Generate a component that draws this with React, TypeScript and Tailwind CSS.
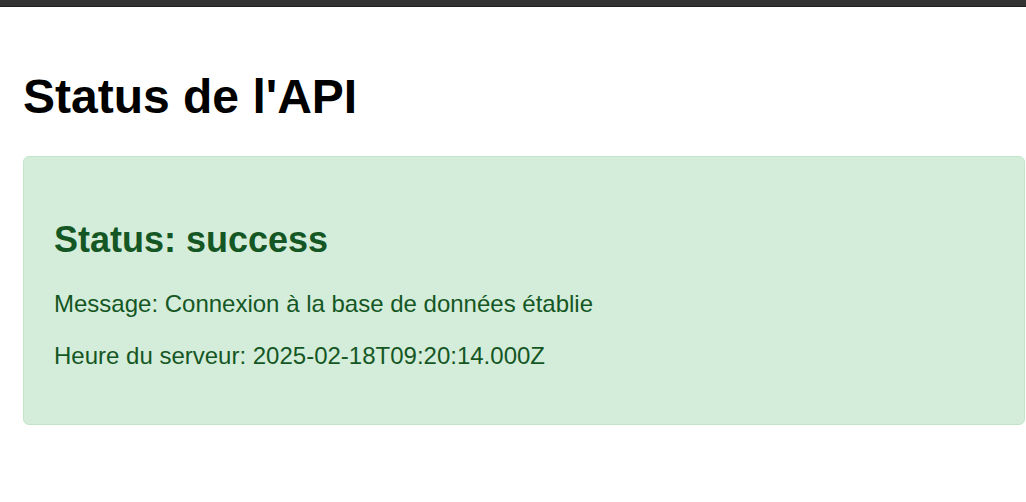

import React from 'react';

interface ApiStatus {
  status: string;
  message: string;
  serverTime: string;
}

const data: ApiStatus = {
  status: 'success',
  message: 'Connexion à la base de données établie',
  serverTime: '2025-02-18T09:20:14.000Z',
};

export default function App() {
  return (
    <div className="min-h-screen bg-white font-['Liberation_Sans',Arial,sans-serif]">
      {/* Top bar */}
      <div className="h-[7px] bg-[#333333] border-b border-[#1f1f1f]" />

      <div className="pl-[23px] pr-[1px]">
        {/* Title */}
        <h1 className="mt-[63px] text-[48px] leading-[54px] font-bold text-black">
          Status de l'API
        </h1>

        {/* Status Card */}
        <div className="mt-[32px] h-[269px] rounded-[6px] border border-[#c3e6cb] bg-[#d4edda] px-[30px] pt-[62px] text-[#155724]">
          <h2 className="text-[36px] leading-[41px] font-bold">
            Status: {data.status}
          </h2>
          <p className="mt-[30px] text-[24px] leading-[27px]">
            Message: {data.message}
          </p>
          <p className="mt-[25px] text-[24px] leading-[27px]">
            Heure du serveur: {data.serverTime}
          </p>
        </div>
      </div>
    </div>
  );
}
